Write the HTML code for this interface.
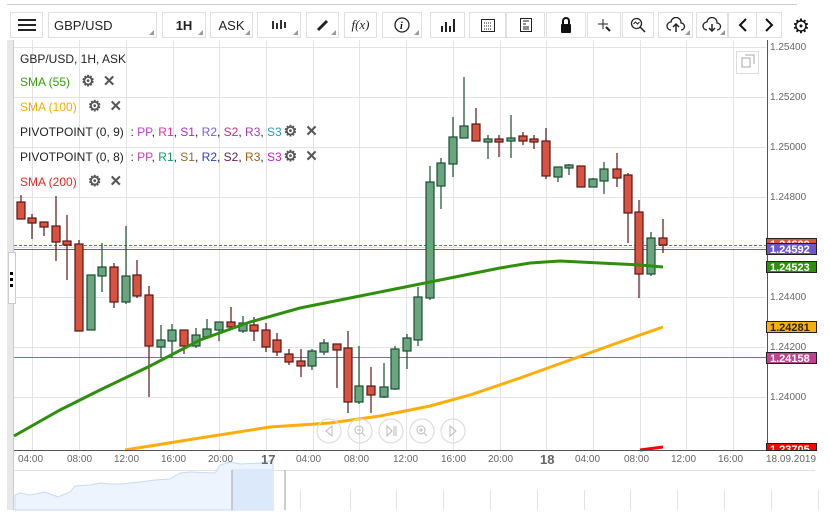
<!DOCTYPE html>
<html><head><meta charset="utf-8"><style>
body{margin:0;width:831px;height:518px;background:#fff;font-family:"Liberation Sans",sans-serif;overflow:hidden;position:relative}
.tb{position:absolute;top:12px;height:26px;border:1px solid #e0e0e0;box-sizing:border-box;background:#fff;font-size:13px;color:#222;display:flex;align-items:center;justify-content:center}
.tb .c{position:absolute;right:2px;bottom:2px;width:0;height:0;border-left:5px solid transparent;border-bottom:5px solid #999}
.lg{position:absolute;left:20px;font-size:12px;color:#222;white-space:nowrap}
.ic{color:#555;font-weight:bold;margin-left:8px;font-size:15px;line-height:12px}
.pl{position:absolute;left:766px;width:51px;height:12px;font-size:11px;font-weight:bold;color:#fff;line-height:12px;padding-left:3px;box-sizing:border-box;border:1px solid #222}
.ax{position:absolute;left:770px;font-size:10px;color:#666}
.tl{position:absolute;top:454px;font-size:10px;color:#666}
</style></head><body>
<div style="position:absolute;left:7px;top:4px;width:790px;height:1px;background:#ccc"></div>
<div class="tb" style="left:10px;width:33px"><svg width="18" height="14"><rect y="1" width="18" height="2" fill="#222"/><rect y="6" width="18" height="2" fill="#222"/><rect y="11" width="18" height="2" fill="#222"/></svg></div>
<div class="tb" style="left:48px;width:109px;justify-content:flex-start;padding-left:5px">GBP/USD<span class="c"></span></div>
<div class="tb" style="left:162px;width:44px;font-weight:bold">1H<span class="c"></span></div>
<div class="tb" style="left:210px;width:43px">ASK<span class="c"></span></div>
<div class="tb" style="left:257px;width:44px"><svg width="16" height="12"><path d="M2 2v8M6 4v6M10 1v9M14 3v6" stroke="#333" stroke-width="2"/></svg><span class="c"></span></div>
<div class="tb" style="left:306px;width:33px"><svg width="14" height="14"><path d="M2 12L11 3" stroke="#222" stroke-width="3"/></svg><span class="c"></span></div>
<div class="tb" style="left:344px;width:33px;font-family:'Liberation Serif',serif;font-style:italic">f(x)</div>
<div class="tb" style="left:382px;width:40px"><svg width="16" height="16"><circle cx="8" cy="8" r="7" fill="none" stroke="#222" stroke-width="1.3"/><text x="6" y="12" font-size="10" font-style="italic" font-family="Liberation Serif" font-weight="bold">i</text></svg><span class="c"></span></div>
<div class="tb" style="left:430px;width:35px"><svg width="16" height="14"><path d="M2 8v6M6 4v10M10 8v6M14 1v13" stroke="#222" stroke-width="2"/></svg></div>
<div class="tb" style="left:469px;width:37px"><svg width="16" height="16"><rect x="1.5" y="2.5" width="13" height="12" fill="none" stroke="#222"/><path d="M4 6h8M4 9h8M4 12h8" stroke="#222" stroke-dasharray="1 1"/></svg></div>
<div class="tb" style="left:506px;width:39px"><svg width="14" height="16"><rect x="1.5" y="1.5" width="11" height="13" fill="none" stroke="#222"/><path d="M4 4h6M4 7h3M4 10h6M4 12h6" stroke="#222"/></svg></div>
<div class="tb" style="left:546px;width:40px"><svg width="14" height="18"><path d="M4 8V5a3 3 0 0 1 6 0v3" fill="none" stroke="#111" stroke-width="2"/><rect x="2" y="8" width="10" height="9" rx="1" fill="#111"/></svg></div>
<div class="tb" style="left:587px;width:34px"><svg width="16" height="16"><path d="M7 2v10M2 7h10" stroke="#222"/><path d="M10 10l4 4" stroke="#222" stroke-width="2"/></svg></div>
<div class="tb" style="left:622px;width:32px"><svg width="16" height="16"><circle cx="6.5" cy="6.5" r="5" fill="none" stroke="#222" stroke-width="1.3"/><path d="M10 10l5 5" stroke="#222" stroke-width="1.5"/><path d="M3.5 7l2-2 2 2 2-2" fill="none" stroke="#222"/></svg></div>
<div class="tb" style="left:658px;width:35px"><svg width="20" height="16"><path d="M5 13a4 4 0 0 1 0-8a5 5 0 0 1 10 1a3 3 0 0 1 0 7" fill="none" stroke="#222" stroke-width="1.3"/><path d="M10 15V8M7 10l3-3 3 3" fill="none" stroke="#222" stroke-width="1.5"/></svg><span class="c"></span></div>
<div class="tb" style="left:696px;width:32px"><svg width="20" height="16"><path d="M5 13a4 4 0 0 1 0-8a5 5 0 0 1 10 1a3 3 0 0 1 0 7" fill="none" stroke="#222" stroke-width="1.3"/><path d="M10 7v7M7 11l3 3 3-3" fill="none" stroke="#222" stroke-width="1.5"/></svg><span class="c"></span></div>
<div class="tb" style="left:728px;width:29px"><svg width="10" height="16"><path d="M8 2L2 8l6 6" fill="none" stroke="#111" stroke-width="2"/></svg></div>
<div class="tb" style="left:756px;width:26px"><svg width="10" height="16"><path d="M2 2l6 6-6 6" fill="none" stroke="#111" stroke-width="2"/></svg></div>
<div style="position:absolute;left:792px;top:14px;font-size:20px;color:#111">&#9881;</div>
<div style="position:absolute;left:7px;top:40px;width:6px;height:470px;background:#e8e8e8;border-right:1px solid #ccc"></div>
<div style="position:absolute;left:8px;top:252px;width:6px;height:50px;background:#fff;border:1px solid #ccc"></div>
<div style="position:absolute;left:10px;top:272px;width:3px;height:3px;background:#000;box-shadow:0 6px 0 #000,0 12px 0 #000"></div>

<svg style="position:absolute;left:0;top:0" width="831" height="518">
<g stroke="#e3e3e3" stroke-width="1" fill="none">
<path d="M14 47.5H766M14 97.5H766M14 147.5H766M14 197.5H766M14 247.5H766M14 297.5H766M14 347.5H766M14 397.5H766"/>
<path d="M32.5 40V450M79.5 40V450M126.5 40V450M173.5 40V450M219.5 40V450M266.5 40V450M313.5 40V450M359.5 40V450M406.5 40V450M453.5 40V450M500.5 40V450M546.5 40V450M593.5 40V450M640.5 40V450M686.5 40V450M733.5 40V450"/>
<path d="M14 470.5H815"/>
<path d="M300.5 490V510M350.5 490V510M396.5 490V510M443.5 490V510M490.5 490V510M537.5 490V510M584.5 490V510M630.5 490V510M677.5 490V510M724.5 490V510M771.5 490V510M818.5 490V510"/>
<path d="M30.5 500V510M78.5 500V510M126.5 500V510M174.5 500V510M222.5 500V510"/>
</g>
<line x1="14" y1="245.5" x2="766" y2="245.5" stroke="#c9523e" stroke-dasharray="3 2"/>
<line x1="14" y1="249.5" x2="766" y2="249.5" stroke="#6a5acd"/>
<line x1="14" y1="357.5" x2="766" y2="357.5" stroke="#d04a9a"/>
<g id="cs" stroke-width="1.2"></g>
<polyline fill="none" stroke="#2e8f0e" stroke-width="3" points="14,436 60,410 100,390 150,366 200,340 250,322 300,308 350,298 400,288 430,282 460,276 500,268 530,263 560,261 600,263 640,265 663,267"/>
<polyline fill="none" stroke="#ffad0a" stroke-width="3" points="125,450 200,438 270,427 330,423 380,416 430,406 470,395 520,378 570,360 620,342 663,327"/>
<path d="M640 450L663 447" stroke="#f00" stroke-width="3"/>
<line x1="14" y1="450.5" x2="767" y2="450.5" stroke="#555"/>
<line x1="767.5" y1="40" x2="767.5" y2="451" stroke="#555"/>
<g fill="none" stroke="#ddd" stroke-width="1.2"><circle cx="329" cy="431" r="12"/><circle cx="360" cy="431" r="12"/><circle cx="391" cy="431" r="12"/><circle cx="422" cy="431" r="12"/><circle cx="453" cy="431" r="12"/></g>
<g fill="none" stroke="#bbb"><path d="M332 426l-6 5 6 5z"/><circle cx="359" cy="430" r="4"/><path d="M357 430h4M362 433l3 3"/><path d="M387 426l5 5-5 5zM394 426v10M396 426v10"/><circle cx="421" cy="430" r="4"/><path d="M419 430h4M421 428v4M424 433l3 3"/><path d="M450 426l6 5-6 5z"/></g>
<rect x="736.5" y="51.5" width="22" height="22" fill="#fff" stroke="#ddd"/>
<path d="M742 58h8v9h-8zM745 55h9v9" fill="none" stroke="#aaa"/>
<path d="M15 495L20 493L30 495L45 492L58 497L70 492L75 486L90 485L100 483L110 484L120 484L140 482L155 480L170 479L180 473L190 472L215 473L220 465L230 462L240 464L260 463L273 460L273 510L15 510Z" fill="#eef4fd" stroke="#c6dbf7"/>
<rect x="232" y="469" width="41" height="41" fill="#dce9fb"/>
<path d="M232 470V510M285 470V510" stroke="#bbb" stroke-width="1.5"/>
</svg>

<div class="lg" style="top:52px">GBP/USD, 1H, ASK</div>
<div class="lg" style="top:75px;color:#36a10f">SMA (55) <span class="ic">&#9881;</span><span class="ic">&#10005;</span></div>
<div class="lg" style="top:100px;color:#ffaa00">SMA (100) <span class="ic">&#9881;</span><span class="ic">&#10005;</span></div>
<div class="lg" style="top:125px">PIVOTPOINT (0, 9) &nbsp;: <span style="color:#c03ee8">PP</span>, <span style="color:#e82ea8">R1</span>, <span style="color:#b02ed0">S1</span>, <span style="color:#7060e8">R2</span>, <span style="color:#c0307a">S2</span>, <span style="color:#a040c0">R3</span>, <span style="color:#2a98c0">S3</span><span class="ic" style="margin-left:2px">&#9881;</span><span class="ic">&#10005;</span></div>
<div class="lg" style="top:150px">PIVOTPOINT (0, 8) &nbsp;: <span style="color:#d040a8">PP</span>, <span style="color:#10a060">R1</span>, <span style="color:#907030">S1</span>, <span style="color:#3040c0">R2</span>, <span style="color:#602060">S2</span>, <span style="color:#a06020">R3</span>, <span style="color:#d020d0">S3</span><span class="ic" style="margin-left:2px">&#9881;</span><span class="ic">&#10005;</span></div>
<div class="lg" style="top:175px;color:#ff2020">SMA (200) <span class="ic">&#9881;</span><span class="ic">&#10005;</span></div>

<div class="ax" style="top:42px">1.25400</div>
<div class="ax" style="top:92px">1.25200</div>
<div class="ax" style="top:142px">1.25000</div>
<div class="ax" style="top:192px">1.24800</div>
<div class="ax" style="top:292px">1.24400</div>
<div class="ax" style="top:342px">1.24200</div>
<div class="ax" style="top:392px">1.24000</div>
<div class="pl" style="top:238px;background:#d9533f;height:8px;overflow:hidden">1.24600</div>
<div class="pl" style="top:243px;background:#6c56d2">1.24592</div>
<div class="pl" style="top:261px;background:#2e8f0e">1.24523</div>
<div class="pl" style="top:321px;background:#ffae0a;color:#222">1.24281</div>
<div class="pl" style="top:352px;background:#c0428e">1.24158</div>
<div class="pl" style="top:443px;background:#f00;height:8px;overflow:hidden">1.23705</div>

<div class="tl" style="left:18px">04:00</div><div class="tl" style="left:67px">08:00</div><div class="tl" style="left:114px">12:00</div><div class="tl" style="left:161px">16:00</div><div class="tl" style="left:208px">20:00</div>
<div class="tl" style="left:261px;font-size:13px;font-weight:bold;top:452px">17</div>
<div class="tl" style="left:296px">04:00</div><div class="tl" style="left:344px">08:00</div><div class="tl" style="left:393px">12:00</div><div class="tl" style="left:441px">16:00</div><div class="tl" style="left:488px">20:00</div>
<div class="tl" style="left:540px;font-size:13px;font-weight:bold;top:452px">18</div>
<div class="tl" style="left:575px">04:00</div><div class="tl" style="left:624px">08:00</div><div class="tl" style="left:671px">12:00</div><div class="tl" style="left:718px">16:00</div><div class="tl" style="left:766px">18.09.2019</div>

<script>
var d=[[21,195,219,202,219,'r'],[32,214,239,218,223,'r'],[44,222,236,222,227,'r'],[56,196,261,226,242,'r'],[67,215,280,241,245,'r'],[79,240,331,244,331,'r'],[91,275,330,275,330,'g'],[102,243,292,267,276,'g'],[114,263,308,267,302,'r'],[126,226,304,276,302,'g'],[137,260,298,275,296,'r'],[149,286,397,295,346,'r'],[161,325,358,340,347,'g'],[172,324,358,330,341,'g'],[184,330,354,330,346,'r'],[196,328,348,335,346,'g'],[207,319,337,329,337,'g'],[219,322,341,322,330,'g'],[231,307,329,322,327,'r'],[243,316,333,323,331,'g'],[254,317,341,325,331,'r'],[266,323,352,330,347,'r'],[277,333,356,340,352,'r'],[289,349,365,354,362,'r'],[301,349,377,361,366,'r'],[312,349,370,351,366,'g'],[324,339,355,343,352,'g'],[337,344,388,344,350,'r'],[348,331,413,348,402,'r'],[359,346,404,386,402,'g'],[371,367,413,386,395,'r'],[384,363,398,387,397,'g'],[395,346,390,349,389,'g'],[407,334,369,338,351,'g'],[418,287,346,297,340,'g'],[430,166,300,182,298,'g'],[441,158,209,163,186,'g'],[453,117,177,137,164,'g'],[464,77,138,126,138,'g'],[476,108,141,124,141,'r'],[488,135,159,139,142,'g'],[499,135,157,139,142,'r'],[511,115,158,138,141,'g'],[523,132,145,136,141,'r'],[534,135,149,139,142,'r'],[546,128,179,141,176,'r'],[558,167,182,167,177,'g'],[569,164,175,165,168,'g'],[581,166,187,166,187,'r'],[593,178,187,179,187,'g'],[604,162,194,169,181,'g'],[617,153,187,169,178,'r'],[628,173,243,175,213,'r'],[639,200,298,212,274,'r'],[651,232,276,238,274,'g'],[663,219,253,238,245,'r']];
var s='';d.forEach(function(c){var r=c[5]=='r',st=r?'#5a1414':'#1a4d2e',f=r?'#d95341':'#69a680';
s+='<line x1="'+c[0]+'" y1="'+c[1]+'" x2="'+c[0]+'" y2="'+c[2]+'" stroke="'+st+'"/>';
s+='<rect x="'+(c[0]-4)+'" y="'+c[3]+'" width="8" height="'+Math.max(2,c[4]-c[3])+'" fill="'+f+'" stroke="'+st+'"/>';});
document.getElementById('cs').innerHTML=s;
</script>
</body></html>
